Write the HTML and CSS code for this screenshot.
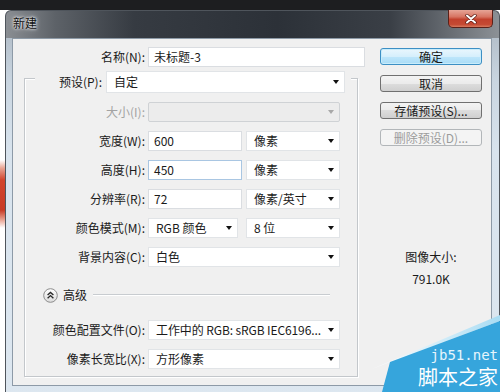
FILE: index.html
```html
<!DOCTYPE html>
<html lang="zh-CN">
<head>
<meta charset="utf-8">
<title>新建</title>
<link rel="stylesheet" href="styles.css">
</head>
<body>
<div class="screen">
  <div class="gutter"></div>
  <div class="window">
    <div class="titlebar">
      <span class="title">新建</span>
      <span class="close">
        <svg width="12" height="10" viewBox="0 0 12 10"><path d="M2 1.5 L10 8.5 M10 1.5 L2 8.5" stroke="#5a1a12" stroke-width="3.4" stroke-linecap="round"/><path d="M2 1.5 L10 8.5 M10 1.5 L2 8.5" stroke="#fff" stroke-width="2" stroke-linecap="round"/></svg>
      </span>
    </div>
    <div class="client">
      <div class="left">
        <div class="namerow">
          <span class="lbl name-lbl">名称(N):</span>
          <div class="field name-field">未标题-3</div>
        </div>
        <div class="group">
          <div class="legend">
            <span class="plabel">预设(P):</span>
            <div class="select preset">自定<i class="arrow"></i></div>
          </div>
          <div class="row">
            <span class="lbl dim">大小(I):</span>
            <div class="select full disabled"><span></span><i class="arrow"></i></div>
          </div>
          <div class="row">
            <span class="lbl">宽度(W):</span>
            <div class="field half">600</div>
            <div class="select half unit">像素<i class="arrow"></i></div>
          </div>
          <div class="row">
            <span class="lbl">高度(H):</span>
            <div class="field half focus">450</div>
            <div class="select half unit">像素<i class="arrow"></i></div>
          </div>
          <div class="row">
            <span class="lbl">分辨率(R):</span>
            <div class="field half">72</div>
            <div class="select half unit">像素/英寸<i class="arrow"></i></div>
          </div>
          <div class="row">
            <span class="lbl">颜色模式(M):</span>
            <div class="select mode">RGB 颜色<i class="arrow"></i></div>
            <div class="select half">8 位<i class="arrow"></i></div>
          </div>
          <div class="row">
            <span class="lbl">背景内容(C):</span>
            <div class="select full">白色<i class="arrow"></i></div>
          </div>
          <div class="adv">
            <svg class="chev" width="15" height="15" viewBox="0 0 15 15">
              <defs><linearGradient id="cg" x1="0" y1="0" x2="0" y2="1"><stop offset="0" stop-color="#ffffff"/><stop offset="1" stop-color="#dcdcdc"/></linearGradient></defs>
              <circle cx="7.5" cy="7.5" r="6.8" fill="url(#cg)" stroke="#8c8c8c" stroke-width="1"/>
              <path d="M4.6 7 L7.5 4.4 L10.4 7 M4.6 10.2 L7.5 7.6 L10.4 10.2" fill="none" stroke="#2a2a2a" stroke-width="1.4"/>
            </svg>
            <span class="advtext">高级</span>
            <span class="advline"></span>
          </div>
          <div class="row profile">
            <span class="lbl">颜色配置文件(O):</span>
            <div class="select full"><span class="clip">工作中的 RGB: sRGB IEC6196...</span><i class="arrow"></i></div>
          </div>
          <div class="row">
            <span class="lbl">像素长宽比(X):</span>
            <div class="select full">方形像素<i class="arrow"></i></div>
          </div>
        </div>
      </div>
      <div class="right">
        <div class="btn default">确定</div>
        <div class="btn">取消</div>
        <div class="btn">存储预设(S)...</div>
        <div class="btn disabled">删除预设(D)...</div>
        <div class="imgsize">图像大小:</div>
        <div class="imgval">791.0K</div>
      </div>
    </div>
  </div>
  <svg class="watermark" width="130" height="80" viewBox="0 0 130 80">
    <defs>
      <linearGradient id="wg" x1="0" y1="0" x2="1" y2="0">
        <stop offset="0" stop-color="#ffffff"/>
        <stop offset="1" stop-color="#a9dcf3"/>
      </linearGradient>
    </defs>
    <polygon points="2,57 130,3 130,9 20,50" fill="url(#wg)"/>
    <polygon points="12,80 20,50 130,9 130,80" fill="#36a5dc"/>
    <text x="128" y="48" text-anchor="end" class="wm-en">jb51.net</text>
    <text x="128" y="73" text-anchor="end" class="wm-cn">脚本之家</text>
  </svg>
</div>
</body>
</html>
```

FILE: styles.css
```css
* { box-sizing: border-box; }
html, body { margin: 0; padding: 0; }
body {
  width: 500px;
  height: 392px;
  overflow: hidden;
  font-family: "Noto Sans CJK SC", "Noto Sans", sans-serif;
  font-size: 12px;
  color: #1a1a1a;
}
.screen {
  position: relative;
  width: 500px;
  height: 392px;
  overflow: hidden;
  display: flex;
  padding-top: 10px;
  background: linear-gradient(#1d1e20 0, #1d1e20 10px, #ffffff 10px);
}
.gutter {
  width: 5px;
  flex: none;
  background: linear-gradient(to bottom, #ffffff 0, #ffffff 150px, #e9a594 158px, #d2452d 170px, #c73a25 200px, #eaa595 210px, #ffffff 218px);
}
.window {
  width: 495px;
  flex: none;
  height: 390px;
  display: flex;
  flex-direction: column;
  border: 1px solid #4f555c;
  border-bottom: none;
  border-radius: 6px 6px 0 0;
  background:
    linear-gradient(90deg, #8a8e93 0%, #5d6268 10%, #363b42 26%, #2c3138 55%, #3a3f46 78%, #6f747a 92%, #8c9196 100%) top left / 100% 27px no-repeat,
    linear-gradient(#a9b4bf 0, #c9d5e0 70px, #d8e3ed 140px, #dde7f0 100%);
}
.titlebar {
  height: 27px;
  flex: none;
  display: flex;
  justify-content: space-between;
  align-items: flex-start;
}
.title {
  padding: 4px 0 0 7px;
  line-height: 16px;
  font-size: 12px;
  color: #101010;
  text-shadow: 0 0 5px #d9dcdf, 0 0 3px #d9dcdf, 0 0 2px #e6e8ea;
}
.close {
  width: 45px;
  height: 18px;
  margin: -1px 6px 0 0;
  border: 1px solid #5b2119;
  border-top: none;
  border-radius: 0 0 5px 5px;
  background: linear-gradient(#e6a597 0, #d77462 40%, #c2412d 55%, #c54a33 85%, #d77a5e 100%);
  display: flex;
  align-items: center;
  justify-content: center;
}
.close svg { display: block; }
.client {
  flex: none;
  height: 348px;
  margin: 0 7px 0 6px;
  background: #f0f0f0;
  border: 1px solid #8d9aa7;
  display: flex;
}
.left { width: 367px; flex: none; }
.namerow {
  display: flex;
  align-items: center;
  height: 20px;
  margin-top: 8px;
}
.lbl {
  flex: none;
  text-align: right;
  padding-right: 3px;
  line-height: 16px;
  white-space: nowrap;
}
.name-lbl { width: 135px; }
.dim { color: #a3a3a3; }
.field {
  flex: none;
  height: 20px;
  background: #ffffff;
  border: 1px solid #dadde1;
  line-height: 18px;
  padding-left: 5px;
}
.field.focus { border-color: #a9c6e2; }
.name-field { width: 217px; }
.group {
  width: 334px;
  margin: 11px 0 0 11px;
  border: 1px solid #c3c7cb;
  box-shadow: inset 1px 1px #ffffff, 1px 1px #ffffff;
  padding-bottom: 7px;
}
.legend {
  display: flex;
  align-items: center;
  width: 316px;
  height: 22px;
  margin: -8px 0 0 10px;
  background: #f0f0f0;
}
.plabel {
  width: 71px;
  text-align: right;
  padding-right: 4px;
  line-height: 16px;
}
.select {
  flex: none;
  height: 20px;
  display: flex;
  align-items: center;
  justify-content: space-between;
  background: #ffffff;
  border: 1px solid #e1e4e7;
  padding: 0 5px 0 7px;
  line-height: 18px;
  white-space: nowrap;
}
.select.preset { width: 239px; height: 22px; }
.arrow {
  flex: none;
  width: 0;
  height: 0;
  border-left: 3px solid transparent;
  border-right: 3px solid transparent;
  border-top: 4px solid #111111;
}
.select.disabled {
  background: #ececec;
  border-color: #cfd2d5;
  border-radius: 2px;
}
.select.disabled .arrow { border-top-color: #a8a8a8; }
.row {
  display: flex;
  align-items: center;
  height: 20px;
  margin-top: 9px;
}
.row .lbl { width: 123px; }
.half { width: 94px; margin-right: 4px; }
.field.half { padding-left: 5px; }
.mode { width: 90px; margin-right: 8px; }
.full { width: 192px; }
.clip { overflow: hidden; text-overflow: clip; letter-spacing: -0.1px; }
.adv {
  display: flex;
  align-items: center;
  height: 16px;
  margin: 20px 27px 0 18px;
}
.chev { display: block; flex: none; }
.advtext { margin-left: 5px; line-height: 16px; }
.advline {
  flex: 1;
  margin-left: 6px;
  height: 2px;
  border-top: 1px solid #c8ccd0;
  border-bottom: 1px solid #ffffff;
}
.row.profile { margin-top: 17px; }
.right {
  width: 102px;
  flex: none;
  padding-top: 9px;
}
.btn {
  height: 17px;
  margin-bottom: 10px;
  border: 1px solid #707070;
  border-radius: 3px;
  background: linear-gradient(#f3f3f3 0, #ebebeb 50%, #dddddd 50%, #cfcfcf 100%);
  text-align: center;
  line-height: 15px;
  white-space: nowrap;
}
.btn.default {
  border-color: #3c8fc4;
  background: linear-gradient(#e9f6fd 0, #d6effc 50%, #bfe6fb 50%, #a9dcf6 100%);
  box-shadow: inset 0 0 0 1px #c8ecfb;
}
.btn.disabled {
  border-color: #b2b6b9;
  background: #f4f4f4;
  color: #9c9c9c;
}
.imgsize {
  margin-top: 103px;
  text-align: center;
  line-height: 16px;
}
.imgval {
  margin-top: 6px;
  text-align: center;
  line-height: 16px;
}
.watermark {
  position: absolute;
  right: 0;
  bottom: 0;
  display: block;
}
.wm-en {
  font-family: "DejaVu Sans Mono", monospace;
  font-size: 14px;
  fill: #e6f5fc;
}
.wm-cn {
  font-family: "Noto Sans CJK SC", sans-serif;
  font-size: 20px;
  fill: #ffffff;
}
```
